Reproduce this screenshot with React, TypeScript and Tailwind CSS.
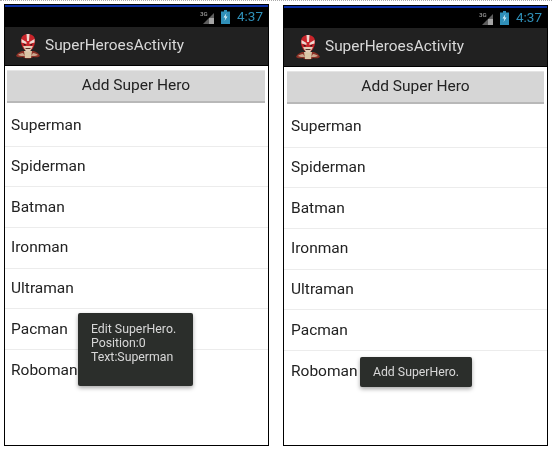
const heroes = ['Superman', 'Spiderman', 'Batman', 'Ironman', 'Ultraman', 'Pacman', 'Roboman']

const HeroIcon = () => (
  <svg width="26" height="27" viewBox="0 0 26 27" className="shrink-0">
    <path d="M1 23c1-3 5-5 8-5h8c3 0 7 2 8 5-2 2-5 1-7 1-2 2-8 2-10 0-2 0-5 1-7-1z" fill="#8c3026" />
    <path d="M3 22c1-1 3-2 5-2l2 3H6zM23 22c-1-1-3-2-5-2l-2 3h4z" fill="#c9a58c" />
    <path d="M9 18h8l-1 7h-6z" fill="#d9c5a6" />
    <path d="M6 8c0-5 3-7 7-7s7 2 7 7c0 5-3 10-7 10S6 13 6 8z" fill="#c8242a" />
    <path d="M11.5 1h3l-.5 7h-2zM6.5 6l5 3v2l-5-1.500zM19.500 6l-5 3v2l5-1.500z" fill="#eed8d0" />
    <path d="M8 13h10l-3 5.500h-4z" fill="#e2cdb8" />
    <path d="M8 10.500l3 1-1 1.500zM18 10.500l-3 1 1 1.500z" fill="#301010" />
    <path d="M10.500 15h5v1h-5z" fill="#5a3028" />
  </svg>
)

const StatusIcons = () => (
  <div className="flex items-center">
    <svg width="15" height="15" viewBox="0 0 15 15">
      <text x="0" y="6" fontSize="6" fontWeight="700" fontFamily="Roboto, sans-serif" fill="#8a8a8a">3G</text>
      <path d="M3 14L14 3v11z" fill="#5e5e5e" />
      <path d="M9 8h5v6H9z" fill="#a4a4a4" />
    </svg>
    <svg width="9" height="14" viewBox="0 0 9 14" className="ml-[6px]">
      <path d="M3 0h3v1.500h3V14H0V1.500h3z" fill="#2f8fb8" />
      <path d="M5.500 3L2.500 7.500h2L3.500 11l3-4.500h-2z" fill="#dff3fa" />
    </svg>
  </div>
)

type PhoneProps = {
  frame: string
  inner: string
  toast: React.ReactNode
}

const Phone = ({ frame, inner, toast }: PhoneProps) => (
  <div className={`${frame} relative w-[265px] shrink-0 border border-black bg-white`}>
    <div className="flex h-[22px] items-center justify-end gap-[7px] border-t-2 border-[#0a2fa8] bg-black pr-[5px]">
      <StatusIcons />
      <span className="text-[13.5px] leading-none text-[#2f8fb8]">4:37</span>
    </div>
    <div className={`${inner} flex h-[39px] items-center gap-[4px] border-b border-black bg-[#212121]`}>
      <span className="ml-[10px]">
        <HeroIcon />
      </span>
      <span className="text-[15.4px] text-[#d8d8d8]">SuperHeroesActivity</span>
    </div>
    <div className={`${inner} pr-[3px] pt-[4px]`}>
      <div className="pl-[2px]">
        <button
          type="button"
          className="h-[33px] w-full border-t border-b-2 border-t-[#e4e4e4] border-b-[#b8b8b8] bg-[#d6d6d6] text-[15.5px] text-[#222]"
        >
          Add Super Hero
        </button>
      </div>
    </div>
    <ul className="pt-[3px]">
      {heroes.map((hero) => (
        <li
          key={hero}
          className={`${inner} flex h-[40.7px] items-center border-b border-[#ececec] text-[15.5px] text-[#222] last:border-b-0`}
        >
          <span className="ml-[6px]">{hero}</span>
        </li>
      ))}
    </ul>
    {toast}
  </div>
)

export default function App() {
  return (
    <div
      className="flex h-[450px] w-[552px] gap-[14px] overflow-hidden border-t border-dotted border-[#aaaaaa] bg-white pl-[4px] pt-[3px] blur-[0.35px]"
      style={{ fontFamily: 'Roboto, sans-serif' }}
    >
      <Phone
        frame="h-[442px]"
        inner=""
        toast={
          <div className="absolute left-[73px] top-[308px] h-[73px] w-[115px] rounded-[2px] bg-[#2b2e2b] pl-[13px] pt-[9px] text-[12.3px] leading-[14px] text-[#d8d8d8] shadow-[0_2px_4px_rgba(0,0,0,0.35)]">
            Edit SuperHero.
            <br />
            Position:0
            <br />
            Text:Superman
          </div>
        }
      />
      <Phone
        frame="mt-[1px] h-[441px]"
        inner="pl-[1px]"
        toast={
          <div className="absolute left-[76px] top-[351px] flex h-[30px] w-[112px] items-center justify-center rounded-[2px] bg-[#2b2e2b] text-[12.3px] text-[#d8d8d8] shadow-[0_2px_4px_rgba(0,0,0,0.35)]">
            Add SuperHero.
          </div>
        }
      />
    </div>
  )
}
